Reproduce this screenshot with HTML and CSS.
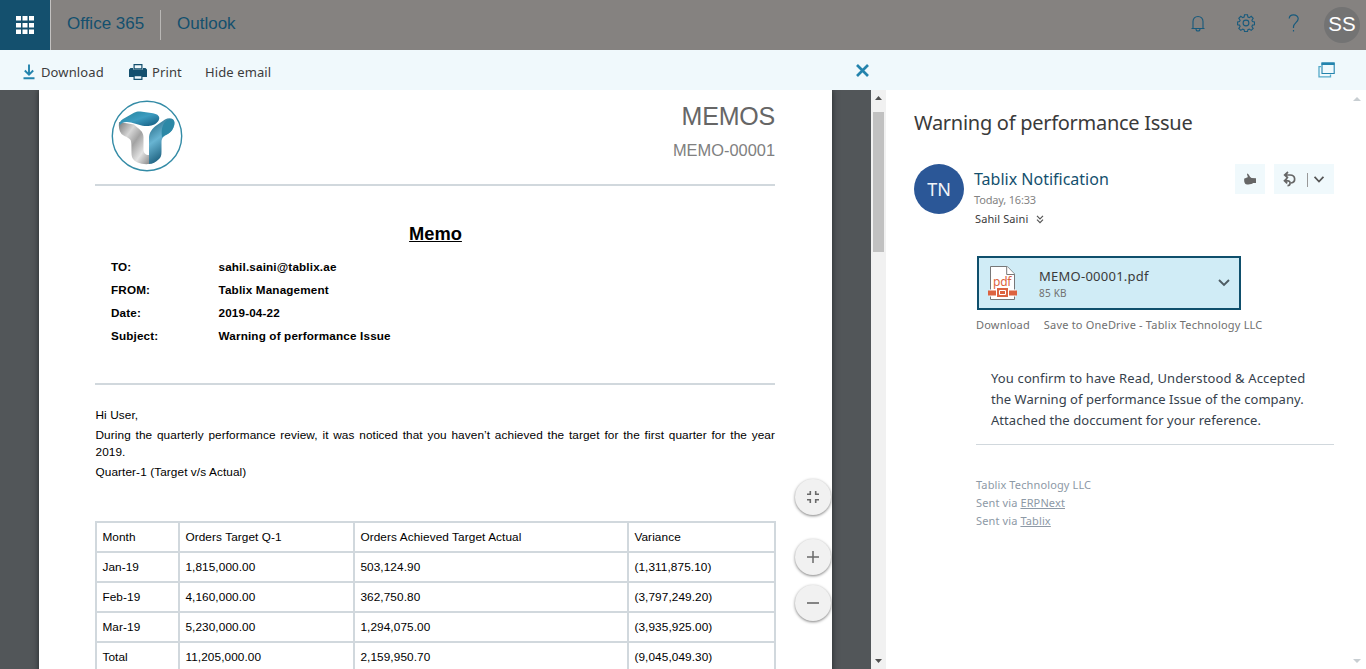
FILE: index.html
```html
<!DOCTYPE html>
<html lang="en">
<head>
<meta charset="utf-8">
<title>Outlook - Warning of performance Issue</title>
<link rel="stylesheet" href="styles.css">
</head>
<body>
<div class="app">
  <header class="suite">
    <div class="launcher">
      <svg width="18" height="18" viewBox="0 0 18 18" fill="#fff"><path d="M0 0h5v4.500H0zM6.500 0h5v4.500h-5zM13 0h5v4.500h-5zM0 7h5v4.500H0zM6.500 7h5v4.500h-5zM13 7h5v4.500h-5zM0 13.500h5V18H0zM6.500 13.500h5V18h-5zM13 13.500h5V18h-5z"/></svg>
    </div>
    <span class="brand">Office 365</span>
    <span class="split"></span>
    <span class="product">Outlook</span>
    <div class="suite-icons">
      <svg class="bell" width="14" height="18" viewBox="0 0 14 18" fill="none" stroke="#185a7c" stroke-width="1.100"><path d="M2 13.500V6.500C2 3.500 4 1.500 7 1.500s5 2 5 5v7M.5 13.500h13M5 14c0 1.300.8 2 2 2s2-.7 2-2"/></svg>
      <svg class="gear" width="18" height="18" viewBox="0 0 18 18" fill="none" stroke="#185a7c" stroke-width="1.100"><circle cx="9" cy="9" r="2.900"/><path d="M7.500 .8h3l.4 2.200 1.400.6 1.900-1.300 2 2-1.300 1.900.6 1.400 2 .4v2.700l-2 .4-.6 1.400 1.300 1.900-2 2-1.900-1.300-1.400.6-.4 1.800h-3l-.4-1.800-1.400-.6-1.900 1.300-2-2 1.300-1.900-.6-1.400-1.900-.4V8l1.900-.4.6-1.400-1.300-1.900 2-2 1.900 1.300 1.400-.6z"/></svg>
      <svg class="help" width="12" height="18" viewBox="0 0 12 18" fill="none" stroke="#185a7c" stroke-width="1.200"><path d="M1.200 4.500C1.400 2.300 3 .9 5.500.9c2.800 0 4.700 1.500 4.700 3.900 0 3.500-4.700 4.200-4.700 8V14"/><path d="M5.500 16v1.500"/></svg>
      <span class="me">SS</span>
    </div>
  </header>

  <nav class="toolbar">
    <span class="cmd cmd-download">
      <svg width="12" height="16" viewBox="0 0 12 16" fill="none" stroke="#2484ad" stroke-width="1.900"><path d="M6 .5v10M1.800 6.500L6 10.700l4.200-4.200M.5 14.200h11"/></svg>Download</span>
    <span class="cmd cmd-print">
      <svg width="18" height="16" viewBox="0 0 18 16"><path fill="#14506e" d="M1.500 4H4v1.500h10V4h2.500L18 5.500V13H0V5.500z"/><path fill="#f0f9fc" stroke="#14506e" stroke-width="1.200" d="M5.100 .6h7.800v4.200H5.100zM5.100 11.600h7.800v3.800H5.100z"/></svg>Print</span>
    <span class="cmd cmd-hide">Hide email</span>
    <svg class="close" width="13" height="13" viewBox="0 0 13 13" stroke="#2484ad" stroke-width="2.700"><path d="M1 1l11 11M12 1L1 12"/></svg>
    <svg class="popout" width="17" height="16" viewBox="0 0 17 16"><path fill="none" stroke="#55aac9" stroke-width="1.300" d="M3 4.600H1v10.200h11.500v-2.300"/><path fill="#f0f9fc" stroke="#2484ad" stroke-width="1.100" d="M4 1h12.200v10.500H4z"/><path fill="#2484ad" d="M3.500 .5h13V3h-13z"/></svg>
  </nav>

  <main class="panes">
    <section class="viewer">
      <article class="paper">
        <header class="memo-head">
          <svg class="logo" width="72" height="72" viewBox="0 0 72 72">
            <defs>
              <linearGradient id="gray" x1="0" y1="0" x2="1" y2="1"><stop offset="0" stop-color="#777"/><stop offset=".3" stop-color="#d6d6d6"/><stop offset=".5" stop-color="#a2a2a2"/><stop offset=".75" stop-color="#e2e2e2"/><stop offset="1" stop-color="#8b8b8b"/></linearGradient>
              <linearGradient id="teal" x1="0" y1="0" x2="1" y2="1"><stop offset="0" stop-color="#24829b"/><stop offset=".5" stop-color="#3c9cc0"/><stop offset="1" stop-color="#12567b"/></linearGradient>
              <linearGradient id="stem" x1="0" y1="0" x2=".4" y2="1"><stop offset="0" stop-color="#185b77"/><stop offset=".5" stop-color="#68b4d2"/><stop offset="1" stop-color="#155776"/></linearGradient>
            </defs>
            <circle cx="36" cy="36" r="34.700" fill="#fff" stroke="#338ba6" stroke-width="1.400"/>
            <path fill="url(#gray)" d="M8 22c-.5 5 0 9 2.500 12 2.500 2.500 7 3 9 6 1 2 1 6 1 13 0 5 2 7.500 5.500 9.200 3.500 1.500 8 2.300 12 1.800V55c-3.500 0-5.500-2-5.500-6V37c0-6-5-8-9.500-12.500z"/>
            <path fill="url(#teal)" d="M8.500 25.500c-.5-3 1-5 3.500-6.500l11-6.300c2-1.100 4-1.300 6.500-1.200L42 13.200c5 .8 7 3.500 6 6.300-1 3.500-5 5.500-9 6.300-4 .7-8 0-11-1l-8-2.300c-5-1.200-9-.5-11.500 3z"/>
            <path fill="url(#stem)" d="M38 64V38c0-5 3-9.500 8-13l8-5.500c4-2.500 9.500-1.500 9.500 3 0 4.500-2.500 8.500-6 11-4.500 2.500-7 4-7 9v9c0 4-.5 6-3 8-2.500 2.500-6 4.500-9.500 4.500z"/>
            <path fill="#2c88a6" d="M51 37.500c-.6-5-.5-9 1-12 1.500-4 4.500-6.500 7.500-6.500 3.500 0 4.500 3 3.700 6.200-1 4-3 6.800-6 8.600-2.500 1.400-4.800 2.200-6.200 3.700z"/>
          </svg>
          <div class="memo-id"><h1>MEMOS</h1><p>MEMO-00001</p></div>
        </header>
        <h2><span>Memo</span></h2>
        <dl class="fields">
          <dt>TO:</dt><dd>sahil.saini@tablix.ae</dd>
          <dt>FROM:</dt><dd>Tablix Management</dd>
          <dt>Date:</dt><dd>2019-04-22</dd>
          <dt>Subject:</dt><dd>Warning of performance Issue</dd>
        </dl>
        <div class="letter">
          <p>Hi User,</p>
          <p class="justify">During the quarterly performance review, it was noticed that you haven’t achieved the target for the first quarter for the year 2019.</p>
          <p>Quarter-1 (Target v/s Actual)</p>
        </div>
        <table class="orders">
          <colgroup><col class="c1"><col class="c2"><col class="c3"><col class="c4"></colgroup>
          <tr><td>Month</td><td>Orders Target Q-1</td><td>Orders Achieved Target Actual</td><td>Variance</td></tr>
          <tr><td>Jan-19</td><td>1,815,000.00</td><td>503,124.90</td><td>(1,311,875.10)</td></tr>
          <tr><td>Feb-19</td><td>4,160,000.00</td><td>362,750.80</td><td>(3,797,249.20)</td></tr>
          <tr><td>Mar-19</td><td>5,230,000.00</td><td>1,294,075.00</td><td>(3,935,925.00)</td></tr>
          <tr><td>Total</td><td>11,205,000.00</td><td>2,159,950.70</td><td>(9,045,049.30)</td></tr>
        </table>
      </article>
      <div class="zoom">
        <span class="fab fit"><svg width="12" height="12" viewBox="0 0 12 12" fill="none" stroke="#6a6a6a" stroke-width="1.600"><path d="M0 3.300h3.300V0M8.700 0v3.300H12M0 8.700h3.300V12M12 8.700H8.700V12"/></svg></span>
        <span class="fab plus"><svg width="12" height="12" viewBox="0 0 12 12" stroke="#6a6a6a" stroke-width="1.500"><path d="M0 6h12M6 0v12"/></svg></span>
        <span class="fab"><svg width="12" height="12" viewBox="0 0 12 12" stroke="#6a6a6a" stroke-width="1.600"><path d="M0 6h12"/></svg></span>
      </div>
    </section>
    <div class="scrollbar">
      <svg width="7" height="4" viewBox="0 0 7 4"><path d="M0 4l3.500-4L7 4z" fill="#505050"/></svg>
      <span class="thumb"></span>
      <svg width="7" height="4" viewBox="0 0 7 4"><path d="M0 0l3.500 4L7 0z" fill="#505050"/></svg>
    </div>

    <section class="mail">
      <h3>Warning of performance Issue</h3>
      <div class="sender">
        <span class="avatar">TN</span>
        <div class="who">
          <span class="name">Tablix Notification</span>
          <span class="time">Today, 16:33</span>
          <span class="to"><span class="to-name">Sahil Saini</span><svg width="8" height="9" viewBox="0 0 8 9" fill="none" stroke="#555" stroke-width="1.200"><path d="M1 .8l3 3 3-3M1 4.600l3 3 3-3"/></svg></span>
        </div>
        <span class="btn like"><svg width="12" height="12" viewBox="0 0 12 12" fill="#666"><path d="M.3 5.500C1.500 5 3.300 4.800 3.800 4 3.600 2.400 2.500 1 3.200.4c1.200.2 2.200 2 3 3.600L7.500 5l4.500.3V10H9c-1 1.500-5 1.700-7 1.200C.6 10.500-.2 8.500.3 5.500z"/></svg></span>
        <span class="btn reply">
          <svg width="13" height="16" viewBox="0 0 13 16" fill="none" stroke="#666" stroke-width="1.700"><path d="M1.500 4h5.500c6 0 6 7.500 1 8M5 1L1.700 4 5 7M1.500 9.800h3.300c3.200 0 3 4.800-.3 4.900M4.200 7.200L1.500 9.800l2.700 2.600"/></svg>
          <i></i>
          <svg class="chev" width="10" height="7" viewBox="0 0 10 7" fill="none" stroke="#555" stroke-width="1.700"><path d="M.6 .8L5 5.500 9.400 .8"/></svg>
        </span>
      </div>
      <div class="attachment">
        <svg class="pdf" width="30" height="36" viewBox="0 0 30 36">
          <path d="M2.500 1.500h16.700l7.300 7.500v25.500h-24z" fill="#fff" stroke="#777"/><path d="M18.700 1.500V9.500h7.800" fill="#fff" stroke="#777"/>
          <text x="5" y="21" class="pdf-label" textLength="18.500">pdf</text>
          <path fill="#fff" d="M1.500 24.500h26.500v7h-26.500z"/>
          <path fill="#dc6340" d="M0 25.500h8v5H0zM21 25.500h8v5h-8z"/><path fill="#dc6340" d="M9 23h11v9H9z"/><path fill="none" stroke="#fff" d="M11.500 25.500h6v4h-6z"/>
        </svg>
        <div class="file"><span class="fname">MEMO-00001.pdf</span><span class="fsize">85 KB</span></div>
        <svg width="12" height="8" viewBox="0 0 12 8" fill="none" stroke="#4e5c63" stroke-width="1.900"><path d="M1 1l5 5 5-5"/></svg>
      </div>
      <div class="links"><span>Download</span><span>Save to OneDrive - Tablix Technology LLC</span></div>
      <p class="message"><span class="m1">You confirm to have Read, Understood &amp; Accepted</span><br><span class="m2">the Warning of performance Issue of the company.</span><br><span class="m3">Attached the doccument for your reference.</span></p>
      <div class="signature">Tablix Technology LLC<br>Sent via <u>ERPNext</u><br>Sent via <u>Tablix</u></div>
      <svg class="mail-up" width="8" height="4" viewBox="0 0 8 4"><path d="M0 4l4-4 4 4z" fill="#c8ced2"/></svg>
      <svg class="mail-down" width="8" height="4" viewBox="0 0 8 4"><path d="M0 0l4 4 4-4z" fill="#c8ced2"/></svg>
    </section>
  </main>
</div>
</body>
</html>
```
FILE: styles.css
```css
* { box-sizing: border-box; margin: 0; padding: 0; }
body { width: 1366px; height: 669px; overflow: hidden; background: #fff; font-family: "Noto Sans", "Open Sans", sans-serif; }
svg { display: block; flex: none; }
.app { height: 669px; display: flex; flex-direction: column; }

.suite { height: 50px; flex: none; display: flex; align-items: center; background: #858280; color: #14506e; font: 17px/20px "Liberation Sans", Arial, sans-serif; }
.launcher { width: 51px; height: 50px; padding: 16px 0 0 16px; background: #14506e; border-right: 1px solid #c3c1c0; }
.brand { margin: -2px 0 0 16px; width: 93px; white-space: nowrap; }
.split { width: 1px; height: 30px; background: #b9b7b5; }
.product { margin: -2px 0 0 16px; }
.suite-icons { margin-left: auto; display: flex; align-items: center; }
.bell { margin: -3px 32px 0 0; }
.gear { margin: -4px 33px 0 0; }
.help { margin: -4px 24px 0 0; }
.me { width: 36px; height: 36px; margin-right: 6px; border-radius: 50%; background: #737373; color: #fff; font-size: 20.500px; line-height: 34px; text-align: center; }

.toolbar { height: 40px; flex: none; display: flex; align-items: center; background: #f0f9fc; color: #3c3c3c; font-size: 13px; letter-spacing: .11px; line-height: 20px; padding: 4px 31px 0 23px; }
.cmd { display: flex; align-items: center; white-space: nowrap; }
.cmd svg { margin-top: -1px; }
.cmd-download { width: 106px; gap: 6px; }
.cmd-print { width: 76px; gap: 5px; }
.close { margin: -4px 0 0 651px; }
.cmd-hide { width: 0; }
.popout { margin: -4px 0 0 auto; }

.panes { flex: 1; min-height: 0; display: grid; grid-template-columns: 871px 15px 480px; }
.viewer { position: relative; overflow: hidden; background: #525659; padding-left: 39px; }
.paper { width: 793px; height: 640px; padding: 10px 57px 0 56px; background: #fff; box-shadow: 0 0 6px #24282a; font: 11.800px/17px "Liberation Sans", Arial, sans-serif; letter-spacing: .09px; color: #000; }
.memo-head { height: 86px; display: flex; justify-content: space-between; padding-left: 16px; border-bottom: 2px solid #d1d8dd; letter-spacing: 0; }
.memo-id { text-align: right; color: #666; padding-top: 1px; }
.memo-id h1 { font-size: 25px; letter-spacing: -.2px; font-weight: 400; line-height: 30px; }
.memo-id p { font-size: 16.400px; line-height: 20px; margin-top: 9px; color: #808080; }
.paper h2 { margin-top: 37px; text-align: center; font-size: 18.300px; line-height: 22px; letter-spacing: 0; padding-left: 1px; }
.paper h2 span { text-decoration: underline; text-decoration-thickness: 1px; text-underline-offset: 1px; }
.fields { display: grid; grid-template-columns: 107.500px 1fr; grid-auto-rows: 23px; margin-top: 10px; height: 130px; padding-left: 16px; border-bottom: 2px solid #d1d8dd; font-size: 11.700px; font-weight: 700; line-height: 23px; letter-spacing: .16px; }
.letter { margin: 22px 0 0; padding-left: .5px; }
.letter p { margin-bottom: 3px; }
.justify { text-align: justify; }
.orders { margin-top: 40px; width: 681px; border-collapse: collapse; table-layout: fixed; }
.orders td { height: 30px; padding: 0 5.400px; border: 2px solid #d1d8dd; }
.c1 { width: 83px; } .c2 { width: 175px; } .c3 { width: 274px; } .c4 { width: 147px; }
.zoom { position: absolute; left: 795px; top: 389px; }
.fab { width: 36px; height: 36px; display: flex; align-items: center; justify-content: center; border-radius: 50%; background: #f1f1f1; box-shadow: 0 1px 3px rgba(0,0,0,.5); }
.fit { margin-bottom: 24px; }
.plus { margin-bottom: 10px; }

.scrollbar { background: #f1f1f1; display: flex; flex-direction: column; align-items: center; padding: 6px 0; }
.thumb { width: 11px; height: 140px; margin: 12px 0 auto; background: #c1c1c1; }

.mail { position: relative; padding: 20px 32px 0 28px; color: #3a3a3a; }
.mail h3 { font-weight: 400; font-size: 20px; letter-spacing: -.28px; line-height: 26px; white-space: nowrap; }
.sender { display: flex; align-items: flex-start; margin-top: 28px; height: 92px; }
.avatar { width: 50px; height: 50px; border-radius: 50%; background: #2b5797; color: #f1f4f9; font-size: 18px; line-height: 51px; text-align: center; }
.who { display: flex; flex-direction: column; flex: 1; padding-left: 10px; white-space: nowrap; }
.name { font-size: 16px; line-height: 22px; margin-top: 4px; color: #14506e; }
.time { font-size: 11px; letter-spacing: -.17px; line-height: 18px; margin-top: 1px; color: #838383; }
.to { display: flex; align-items: center; gap: 8px; padding-left: 1px; font-size: 11px; letter-spacing: .1px; line-height: 20px; }
.btn { height: 30px; background: #f0f9fc; display: flex; align-items: center; }
.like { width: 30px; margin-right: 9px; padding-left: 9px; }
.reply { width: 60px; padding-left: 9px; }
.reply i { width: 1px; height: 14px; margin: 2px 6px 0 11px; background: #999; }
.attachment { width: 264px; height: 54px; margin-left: 63px; display: flex; align-items: center; padding: 0 9px; border: 2px solid #0f4f6c; background: #d0ecf6; }
.file { flex: 1; display: flex; flex-direction: column; padding: 2px 0 0 21px; }
.fname { font-size: 13px; letter-spacing: .25px; line-height: 18px; }
.fsize { font-size: 10px; letter-spacing: .2px; line-height: 16px; color: #707070; }
.pdf-label { font-family: "Noto Sans", sans-serif; font-size: 12px; fill: #dc6340; }
.links { display: flex; gap: 14px; margin: 6px 0 0 62px; font-size: 11px; letter-spacing: .19px; line-height: 18px; color: #707070; white-space: nowrap; }
.message { margin: 34px 0 0 62px; height: 77px; padding-left: 15px; border-bottom: 1px solid #d1d8dd; font-size: 13px; line-height: 21px; color: #36414c; white-space: nowrap; }
.m1 { letter-spacing: .13px; }
.m2 { letter-spacing: .03px; }
.m3 { letter-spacing: .06px; }
.signature { margin: 31px 0 0 62px; font-size: 11px; letter-spacing: .12px; line-height: 18px; color: #8d99a6; }
.mail-up { position: absolute; right: 5px; top: 7px; }
.mail-down { position: absolute; right: 5px; bottom: 6px; }
```
